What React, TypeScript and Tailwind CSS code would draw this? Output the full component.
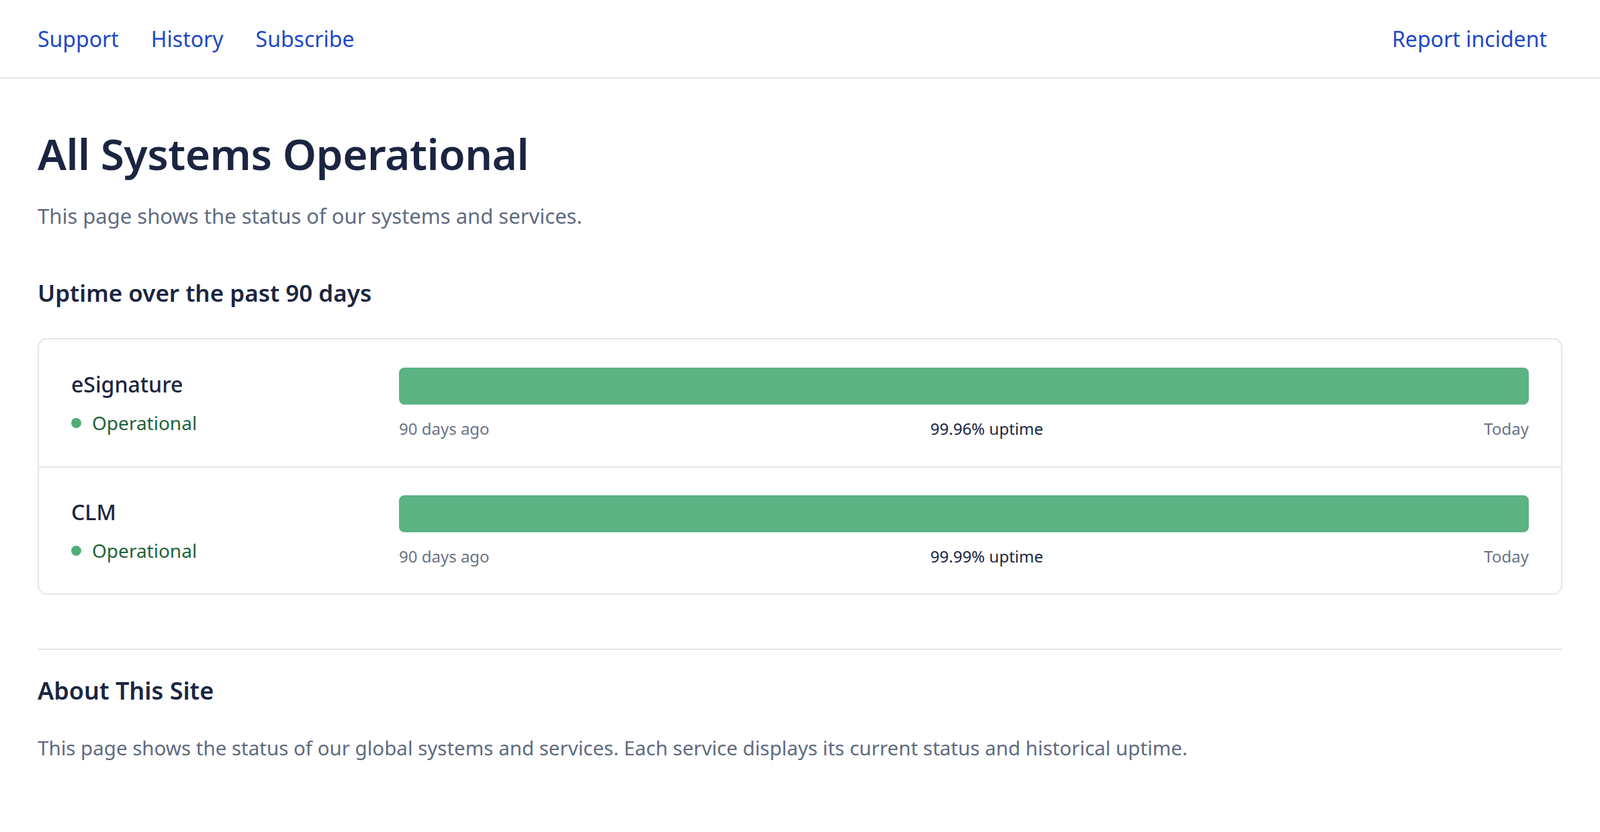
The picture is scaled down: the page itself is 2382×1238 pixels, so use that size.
const services = [
  { name: "eSignature", uptime: "99.96% uptime" },
  { name: "CLM", uptime: "99.99% uptime" },
];

export default function App() {
  return (
    <div className="min-h-screen bg-white font-['Inter',sans-serif] text-[#1b2541]">
      <nav className="flex h-[117px] items-center justify-between border-b-2 border-[#e2e5ea] pl-[56px] pr-[79px] text-[32px] text-[#1f48c7]">
        <div className="flex gap-[48px]">
          <a href="#">Support</a>
          <a href="#">History</a>
          <a href="#">Subscribe</a>
        </div>
        <a href="#">Report incident</a>
      </nav>
      <main className="px-[56px] pt-[74px]">
        <h1 className="text-[64px] font-semibold leading-[1.2] tracking-[-0.5px]">All Systems Operational</h1>
        <p className="mt-[30px] text-[31px] text-[#5f6b80]">This page shows the status of our systems and services.</p>
        <h2 className="mt-[66px] text-[35px] font-semibold">Uptime over the past 90 days</h2>
        <div className="mt-[40px] rounded-[14px] border-2 border-[#e2e5ea]">
          {services.map((s, i) => (
            <div
              key={s.name}
              className={"flex h-[189px] items-center px-[48px] " + (i > 0 ? "border-t-2 border-[#e2e5ea]" : "")}
            >
              <div className="w-[488px] shrink-0">
                <div className="text-[32px] font-medium">{s.name}</div>
                <div className="mt-[12px] flex items-center gap-[16px] text-[28px] text-[#1e6338]">
                  <span className="h-[15px] w-[15px] rounded-full bg-[#4fae75]" />
                  Operational
                </div>
              </div>
              <div className="flex-1 pt-[4px]">
                <div className="h-[55px] rounded-[8px] bg-[#5bb283]" />
                <div className="mt-[18px] flex justify-between text-[24px] text-[#6b7385]">
                  <span>90 days ago</span>
                  <span className="text-[#1b2541]">{s.uptime}</span>
                  <span>Today</span>
                </div>
              </div>
            </div>
          ))}
        </div>
        <div className="mt-[80px] border-t-2 border-[#e2e5ea] pt-[34px]">
          <h2 className="text-[36px] font-semibold">About This Site</h2>
          <p className="mt-[36px] text-[29.5px] text-[#5f6b80]">
            This page shows the status of our global systems and services. Each service displays its current status and historical uptime.
          </p>
        </div>
      </main>
    </div>
  );
}
